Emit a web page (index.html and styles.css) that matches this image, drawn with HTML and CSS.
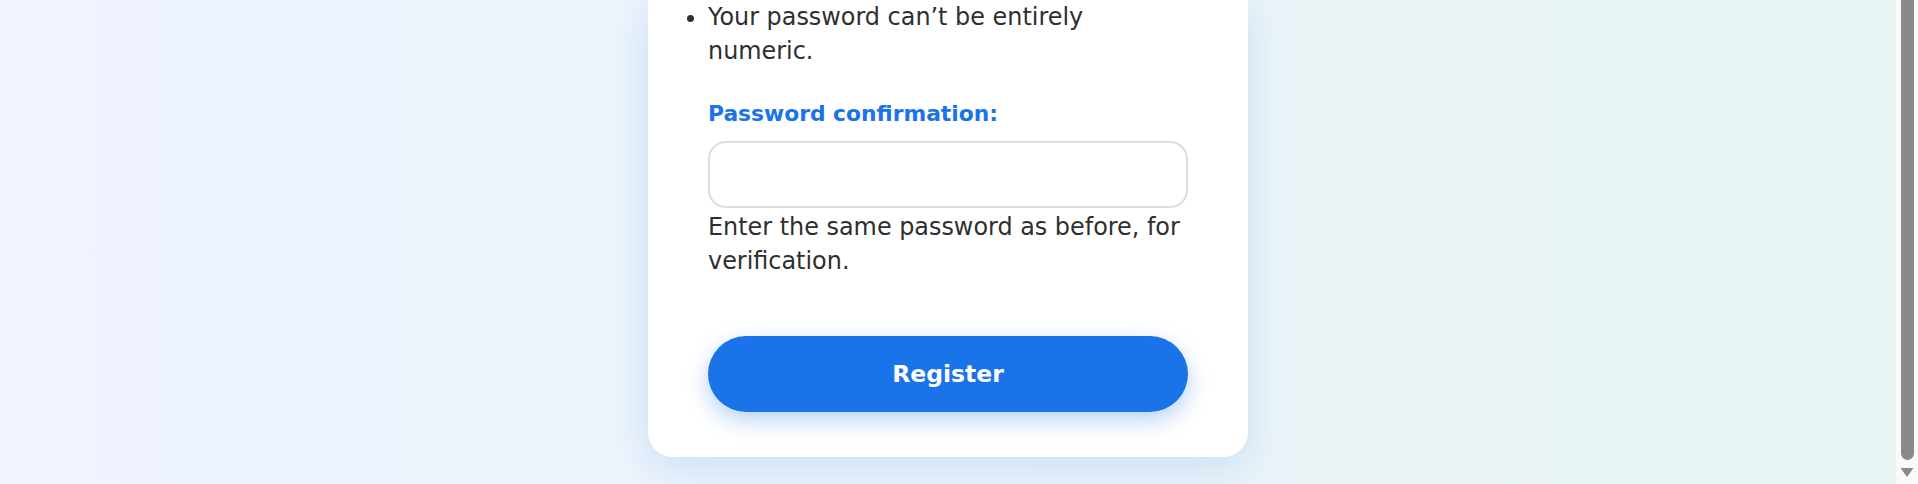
FILE: index.html
```html
<!DOCTYPE html>
<html lang="en">
<head>
<meta charset="utf-8">
<title>Register</title>
<link rel="stylesheet" href="styles.css">
</head>
<body>
  <main class="page">
    <form class="card">
      <ul class="rules">
        <li>Your password can’t be entirely numeric.</li>
      </ul>
      <div class="field">
        <label class="label" for="id_password2">Password confirmation:</label>
        <input class="input" type="password" id="id_password2" name="password2">
        <p class="help">Enter the same password as before, for verification.</p>
      </div>
      <button class="btn" type="submit">Register</button>
    </form>
  </main>
  <div class="scrollbar">
    <div class="thumb"></div>
    <div class="arrow">
      <svg width="14" height="11" viewBox="0 0 14 11"><path d="M0.5 1 L13.5 1 L7 10 Z" fill="#8a8a8a"/></svg>
    </div>
  </div>
</body>
</html>
```

FILE: styles.css
```css
html, body {
  margin: 0;
  height: 100%;
}

body {
  display: flex;
  overflow: hidden;
  font-family: "DejaVu Sans", "Liberation Sans", sans-serif;
  color: #2f2f2f;
}

.page {
  flex: 1;
  display: flex;
  justify-content: center;
  align-items: flex-start;
  background: linear-gradient(90deg, #eff4ff 0%, #e8f4f4 100%);
}

.card {
  width: 600px;
  box-sizing: border-box;
  padding: 0 60px 45px;
  background: #fff;
  border-radius: 0 0 25px 25px;
  box-shadow: 0 10px 40px rgba(26, 115, 232, 0.16);
}

.rules {
  margin: 0;
  padding: 0;
  list-style: disc outside;
  font-size: 23.9px;
  line-height: 34px;
}

.field {
  margin-top: 29px;
}

.label {
  display: block;
  font-size: 21.8px;
  font-weight: 700;
  line-height: 34px;
  color: #1a73e8;
  margin-bottom: 10px;
}

.input {
  display: block;
  width: 100%;
  box-sizing: border-box;
  height: 67px;
  border: 2px solid #dddddd;
  border-radius: 18px;
  background: #fff;
  font: inherit;
  padding: 0 16px;
  outline: none;
}

.help {
  margin: 2px 0 0;
  font-size: 23.9px;
  line-height: 34px;
}

.btn {
  display: flex;
  align-items: center;
  justify-content: center;
  width: 100%;
  height: 76px;
  margin-top: 58px;
  border: none;
  border-radius: 38px;
  background: #1a73e8;
  color: #fff;
  font-family: inherit;
  font-size: 23.5px;
  font-weight: 700;
  box-shadow: 0 8px 22px rgba(26, 115, 232, 0.32);
  cursor: pointer;
}

.scrollbar {
  width: 22px;
  background: #fafafa;
  display: flex;
  flex-direction: column;
  align-items: center;
}

.thumb {
  width: 13px;
  height: 460px;
  background: #8a8a8a;
  border-radius: 0 0 7px 7px;
}

.arrow {
  flex: 1;
  display: flex;
  align-items: center;
  justify-content: center;
}

.arrow svg {
  display: block;
}
```
